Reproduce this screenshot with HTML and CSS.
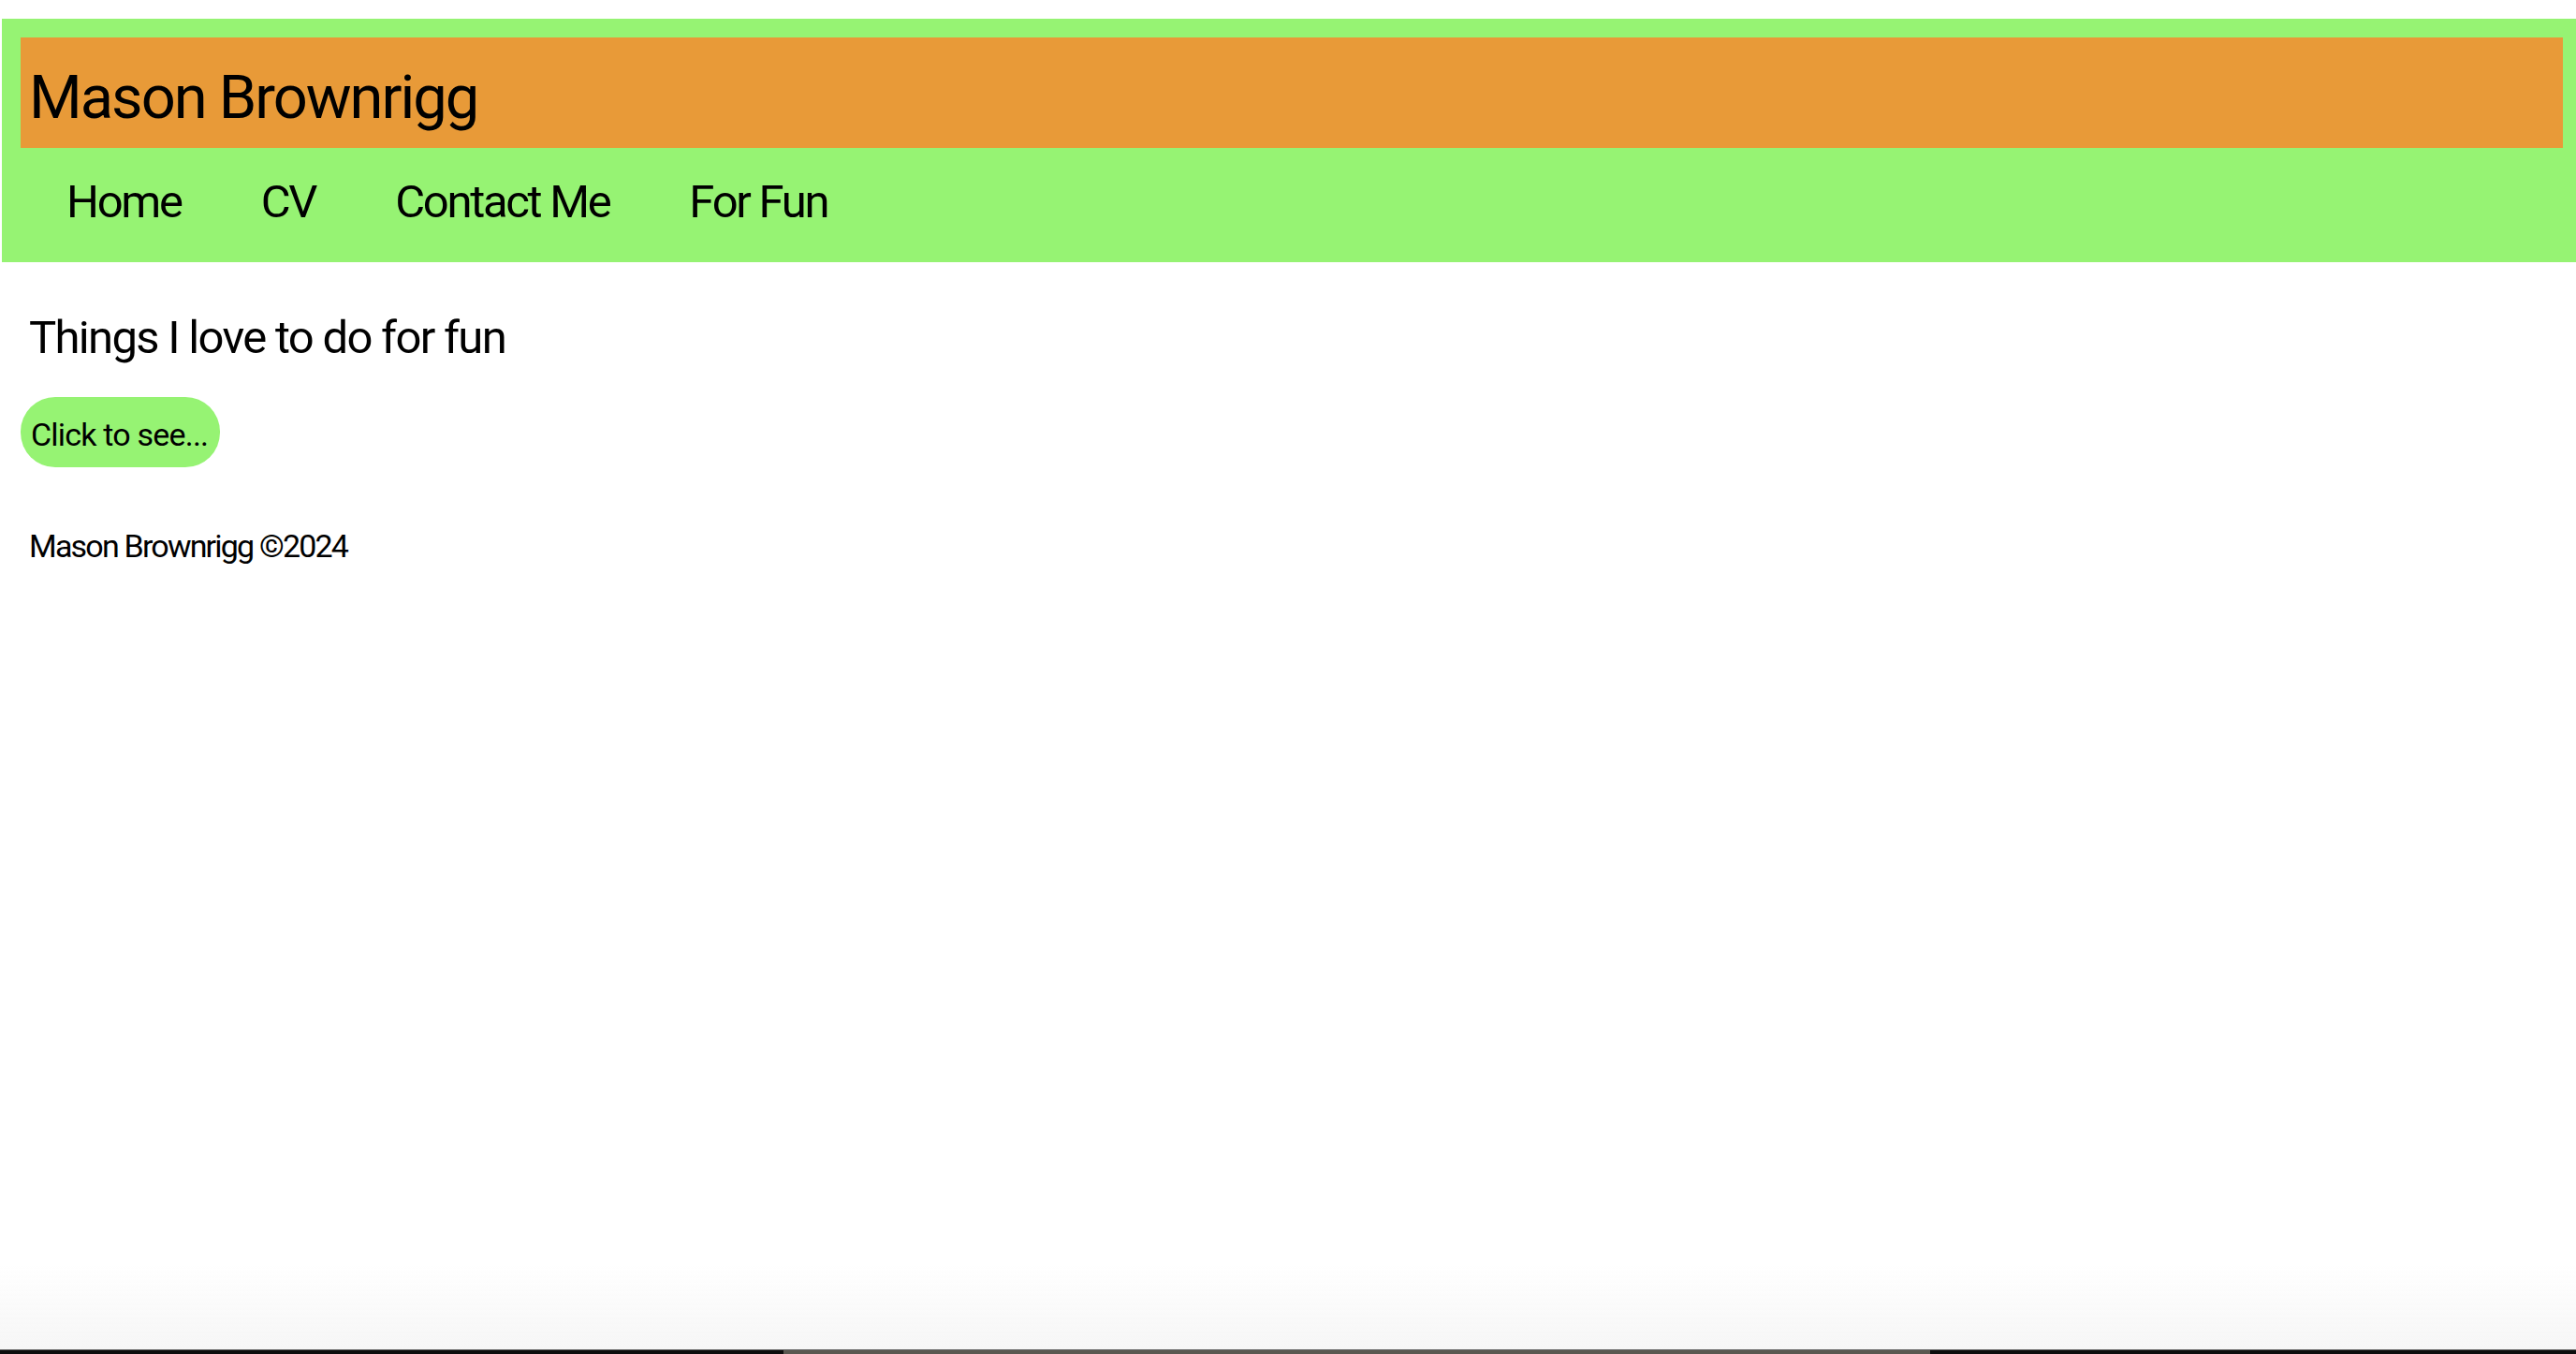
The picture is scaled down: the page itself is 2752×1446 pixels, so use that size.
FILE: index.html
```html
<!DOCTYPE html>
<html lang="en">
<head>
<meta charset="utf-8">
<title>Mason Brownrigg - For Fun</title>
<link rel="stylesheet" href="styles.css">
</head>
<body>
<header class="site-header">
  <h1 class="site-title">Mason Brownrigg</h1>
  <nav class="site-nav">
    <a class="nav-link" href="#">Home</a>
    <a class="nav-link" href="#">CV</a>
    <a class="nav-link" href="#">Contact Me</a>
    <a class="nav-link" href="#">For Fun</a>
  </nav>
</header>
<main class="content">
  <h2 class="page-heading">Things I love to do for fun</h2>
  <button class="reveal-button" type="button">Click to see...</button>
</main>
<footer class="site-footer">Mason Brownrigg ©2024</footer>
<div class="screen-edge"><div class="screen-edge-bar"></div></div>
</body>
</html>
```
FILE: styles.css
```css
html, body {
  margin: 0;
  padding: 0;
  background: #ffffff;
}

body {
  font-family: Roboto, "Liberation Sans", sans-serif;
  color: #000000;
  min-height: 1446px;
}

.site-header {
  margin: 20px 0 0 2px;
  background: #96f373;
  padding-top: 20px;
  height: 260px;
  box-sizing: border-box;
}

.site-title {
  margin: 0 14px 0 20px;
  background: #e89a38;
  height: 118px;
  box-sizing: border-box;
  padding: 10px 0 0 9px;
  font-size: 65px;
  line-height: 108px;
  font-weight: 400;
  letter-spacing: -2px;
}

.site-nav {
  display: flex;
  gap: 85px;
  padding: 29px 0 0 69px;
}

.nav-link {
  font-size: 49px;
  line-height: 57px;
  letter-spacing: -2.3px;
  color: #000000;
  text-decoration: none;
}

.content {
  padding-left: 22px;
  display: flex;
  flex-direction: column;
  align-items: flex-start;
}

.page-heading {
  margin: 52px 0 0 9px;
  font-size: 49px;
  line-height: 57px;
  font-weight: 400;
  letter-spacing: -1.7px;
}

.reveal-button {
  margin-top: 35px;
  width: 213px;
  height: 75px;
  box-sizing: border-box;
  padding: 20px 0 15px 11px;
  border: none;
  border-radius: 37px;
  background: #96f373;
  font-family: Roboto, "Liberation Sans", sans-serif;
  font-size: 34px;
  line-height: 40px;
  letter-spacing: -0.8px;
  color: #000000;
  text-align: left;
  white-space: nowrap;
}

.site-footer {
  margin-top: 64px;
  padding-left: 31px;
  font-size: 34px;
  line-height: 40px;
  letter-spacing: -1.8px;
}

.screen-edge {
  position: fixed;
  left: 0;
  right: 0;
  bottom: 0;
  height: 96px;
  background: linear-gradient(to bottom, rgba(255,255,255,0) 0%, rgba(246,246,246,1) 95%, #0d0d0d 95.5%, #0d0d0d 100%);
  pointer-events: none;
}

.screen-edge-bar {
  position: absolute;
  left: 837px;
  width: 1225px;
  bottom: 0;
  height: 4px;
  background: #5a5850;
}
```
